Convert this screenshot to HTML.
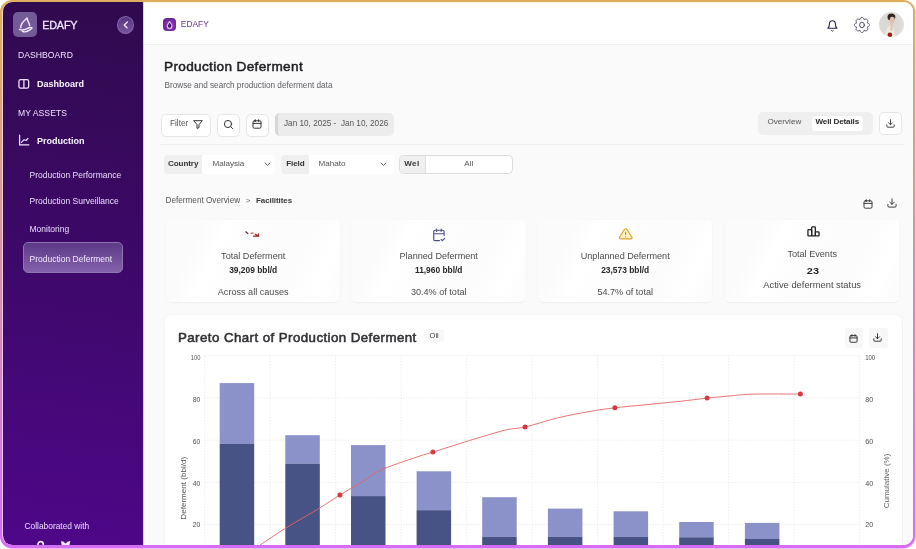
<!DOCTYPE html>
<html lang="en">
<head>
<meta charset="utf-8">
<title>EDAFY – Production Deferment</title>
<style>
*{box-sizing:border-box;margin:0;padding:0}
html,body{width:916px;height:549px;overflow:hidden;background:#fff}
body{font-family:"Liberation Sans",sans-serif;position:relative;color:#222;-webkit-font-smoothing:antialiased}
.abs{position:absolute}
.t{position:absolute;white-space:nowrap;line-height:1;transform:translateY(-50%)}
.tc{position:absolute;white-space:nowrap;line-height:1;transform:translate(-50%,-50%)}
svg{position:absolute;overflow:visible}

/* frame */
#halo{position:absolute;left:0;top:0;width:916px;height:549px;border-radius:13px;background:linear-gradient(180deg,#f3dfb9,#ecb9fa)}
#frame{position:absolute;left:0;top:0;width:915px;height:548px;border-radius:12px;background:linear-gradient(180deg,#dfae5e 0%,#d56df5 100%)}
#ring{position:absolute;left:2px;top:2px;width:911px;height:543px;border-radius:10px;background:linear-gradient(180deg,#ffd9c8,#f9c9fb)}
#app{position:absolute;left:3px;top:2px;width:910px;height:543px;border-radius:9.5px;overflow:hidden;background:#fafafa}

#pg{position:absolute;left:-3px;top:-2px;width:916px;height:549px;will-change:transform}
/* sidebar */
#side{position:absolute;left:3px;top:2px;width:140px;height:543px;background:linear-gradient(188deg,#2f0a4d 0%,#4e0789 100%)}
#logo{left:13px;top:12px;width:24px;height:25px;border-radius:5px;background:#745a97}
#collapse{left:116.7px;top:15.8px;width:17.8px;height:18.2px;border-radius:50%;border:1px solid #8565ad;background:linear-gradient(180deg,#593680,#7853a0)}
.sec{font-size:8.6px;color:#f1e2ff;letter-spacing:.05px}
.nav{font-size:9px;font-weight:bold;color:#fbf6ff}
.sub{font-size:8.5px;color:#ecdcff}
#active{left:23px;top:242px;width:100px;height:31px;border-radius:5px;border:1px solid #8f74b3;background:linear-gradient(180deg,#5c3888 0%,#8563aa 100%)}
/* main */
#main{position:absolute;left:143px;top:2px;width:770px;height:543px;background:#fafafa}
#hdr{position:absolute;left:143px;top:2px;width:770px;height:43px;background:#fff;border-bottom:1px solid #f0f0f0;box-shadow:inset 0 1px 0 rgba(255,236,150,.4)}
#hlogo{left:163.2px;top:17.9px;width:12.8px;height:13.5px;border-radius:4px;background:radial-gradient(circle at 52% 55%,#b55fd0 0%,#7a2ea6 45%,#5a1c8c 100%)}
#avatar{left:878.8px;top:12px;width:24.8px;height:25px;border-radius:50%;background:radial-gradient(circle at 40% 50%,#dad8d4 0%,#dcdad6 55%,#e9e7e3 100%);overflow:hidden}
.btn{background:#fff;border:1px solid #e6e6e6;border-radius:5px}
#dates{left:275px;top:113.3px;width:119px;height:22.7px;border-radius:5px;background:#ececec;border-left:3px solid #d6d6d6}
#tabs{left:757.5px;top:112px;width:115px;height:23px;border-radius:5px;background:#efefef}
#tabon{left:812px;top:116.3px;width:51px;height:14.5px;border-radius:3.5px;background:#fff}
.lab{background:#efefef}
.labt{font-size:8.1px;font-weight:bold;color:#333;letter-spacing:-.1px}
.sel{background:#fff;border-radius:0 4px 4px 0}
.selt{font-size:8.1px;color:#555}
#wellbox{left:399.3px;top:155px;width:113.3px;height:19px;border:1px solid #dcdcdc;border-radius:4.5px;background:#fff;overflow:hidden}
.card{background:linear-gradient(115deg,#fbfbfb 0%,#fbfbfb 18%,#ffffff 30%,#fdfdfd 46%,#fcfcfc 70%,#ffffff 86%,#fbfbfb 100%);border-radius:5px;box-shadow:0 0 0 1px rgba(0,0,0,.008),0 1px 1.5px rgba(0,0,0,.045)}
.c1{font-size:9.1px;color:#4a4a4a}
.c2{font-size:8.4px;font-weight:bold;color:#262626}
#panel{left:164.5px;top:314.5px;width:737px;height:240px;border-radius:7px;background:#fff;box-shadow:0 0 0 1px rgba(0,0,0,.014),0 1px 2px rgba(0,0,0,.03)}
</style>
</head>
<body>
<div id="halo"></div>
<div id="frame"></div>
<div id="ring"></div>
<div id="app"><div id="pg">
  <!-- ============ SIDEBAR ============ -->
  <div id="side"></div>
  <div class="abs" id="logo"><svg width="25" height="25" viewBox="0 0 25 25" style="left:0;top:0" fill="none" stroke="#f6ecff" stroke-width="1.4" stroke-linecap="round" stroke-linejoin="round"><path d="M14 6.2 C10.6 8.8 7.4 12.6 7.9 15.7"/><path d="M14 6.2 C14.4 8.8 16.4 11.4 16.6 13.5"/><path d="M6.4 17.4 C9.5 18.6 12 17.8 14.2 16.6 C16 15.6 18 15.2 18.9 16.1"/><path d="M9.3 19.4 C11.8 20.4 14 19.6 15.6 18.6 C16.8 17.9 18 17.3 18.9 16.1"/></svg></div>
  <div class="t" style="left:42.2px;top:24.7px;font-size:10.8px;color:#f3e6ff;letter-spacing:-.16px;-webkit-text-stroke:.3px #f3e6ff">EDAFY</div>
  <div class="abs" id="collapse"><svg width="16" height="16" viewBox="0 0 16 16" style="left:0;top:0" fill="none" stroke="#fbeeff" stroke-width="1.3" stroke-linecap="round" stroke-linejoin="round"><path d="M9.5 4.9 L6.2 8 L9 10.8"/></svg></div>

  <div class="t sec" style="left:18px;top:54.5px">DASHBOARD</div>
  <svg width="12" height="11" viewBox="18 78 12 11" style="left:18px;top:78px" fill="none" stroke="#f1dfff" stroke-width="1.3" stroke-linejoin="round"><rect x="18.95" y="79.65" width="9.7" height="8.5" rx="1.7"/><path d="M23.9 80 V88"/></svg>
  <div class="t nav" style="left:37px;top:83.5px">Dashboard</div>

  <div class="t sec" style="left:18px;top:112.5px">MY ASSETS</div>
  <svg width="12" height="12" viewBox="18 134 12 12" style="left:18px;top:134px" fill="none" stroke="#f1dfff" stroke-width="1.25" stroke-linecap="round" stroke-linejoin="round"><path d="M19.6 135.2 V144.9 H28.8"/><path d="M21.4 142.3 L24.1 139.7 L26.1 140.5 L27.9 138.5" stroke-width="1.15"/></svg>
  <div class="t nav" style="left:37px;top:140.5px">Production</div>

  <div class="t sub" style="left:29.5px;top:174.5px">Production Performance</div>
  <div class="t sub" style="left:29.5px;top:201px">Production Surveillance</div>
  <div class="t sub" style="left:29.5px;top:229px">Monitoring</div>
  <div class="abs" id="active"></div>
  <div class="t sub" style="left:29.5px;top:258.5px;color:#f4eaff">Production Deferment</div>

  <div class="t sub" style="left:24.5px;top:525.5px;font-size:8.4px">Collaborated with</div>
  <svg width="60" height="8" viewBox="0 0 60 8" style="left:30px;top:539px" fill="none" stroke="#f3e6ff" stroke-width="1.7" stroke-linecap="round"><circle cx="10.6" cy="5.4" r="2.7"/><path d="M30.9 2.2 L33.3 2.5 L35.5 4.4 L37.9 2.5 L40.3 2 L39.2 8 H32 Z" fill="#f3e6ff" stroke="none"/></svg>

  <!-- ============ MAIN ============ -->
  <div id="main"></div>
  <div id="hdr"></div>
  <div class="abs" style="left:143px;top:2px;width:1px;height:543px;background:rgba(150,100,200,.32)"></div>
  <div class="abs" id="hlogo"><svg width="13" height="13.5" viewBox="0 0 13 13.5" style="left:0;top:0" stroke-linecap="round" stroke-linejoin="round"><path d="M6.6 3.6 C5.6 5.2 4.3 6.4 4.3 8 A2.3 2.3 0 0 0 8.9 8 C8.9 6.6 7.7 5.4 6.6 3.6 Z" fill="#4a1672" stroke="#e9b6f1" stroke-width="1.1"/><path d="M5 10.6 C6.4 11.2 7.6 10.8 8.8 10" fill="none" stroke="#e7b0ef" stroke-width=".8"/></svg></div>
  <div class="t" style="left:180.8px;top:23.5px;font-size:8.4px;color:#6a3494;letter-spacing:.02px">EDAFY</div>
  <!-- bell -->
  <svg width="13" height="14" viewBox="0 0 13 14" style="left:826px;top:19px" fill="none" stroke="#2c2148" stroke-width="1.1" stroke-linecap="round" stroke-linejoin="round"><path d="M1.9 9.2 C3.1 8.3 3.4 7 3.4 5 A3 3.3 0 0 1 9.4 5 C9.4 7 9.7 8.3 10.9 9.2 Z"/><path d="M5.5 11.5 L6.4 12.3 L7.3 11.5" stroke-width=".9"/></svg>
  <!-- gear -->
  <svg width="18" height="18" viewBox="-9 -9 18 18" style="left:852.5px;top:15.8px" fill="none" stroke="#4a3f66" stroke-width=".92" stroke-linecap="round" stroke-linejoin="round"><path d="M0.00 -7.50 L0.29 -7.48 L0.58 -7.40 L0.86 -7.28 L1.13 -7.12 L1.37 -6.91 L1.60 -6.65 L1.79 -6.36 L1.96 -6.02 L2.08 -5.63 L2.10 -5.08 L2.51 -5.45 L2.87 -5.64 L3.23 -5.76 L3.58 -5.83 L3.91 -5.86 L4.24 -5.83 L4.54 -5.76 L4.82 -5.65 L5.08 -5.49 L5.30 -5.30 L5.49 -5.08 L5.65 -4.82 L5.76 -4.54 L5.83 -4.24 L5.86 -3.91 L5.83 -3.58 L5.76 -3.23 L5.64 -2.87 L5.45 -2.51 L5.08 -2.10 L5.63 -2.08 L6.02 -1.96 L6.36 -1.79 L6.65 -1.60 L6.91 -1.37 L7.12 -1.13 L7.28 -0.86 L7.40 -0.58 L7.48 -0.29 L7.50 -0.00 L7.48 0.29 L7.40 0.58 L7.28 0.86 L7.12 1.13 L6.91 1.37 L6.65 1.60 L6.36 1.79 L6.02 1.96 L5.63 2.08 L5.08 2.10 L5.45 2.51 L5.64 2.87 L5.76 3.23 L5.83 3.58 L5.86 3.91 L5.83 4.24 L5.76 4.54 L5.65 4.82 L5.49 5.08 L5.30 5.30 L5.08 5.49 L4.82 5.65 L4.54 5.76 L4.24 5.83 L3.91 5.86 L3.58 5.83 L3.23 5.76 L2.87 5.64 L2.51 5.45 L2.10 5.08 L2.08 5.63 L1.96 6.02 L1.79 6.36 L1.60 6.65 L1.37 6.91 L1.13 7.12 L0.86 7.28 L0.58 7.40 L0.29 7.48 L0.00 7.50 L-0.29 7.48 L-0.58 7.40 L-0.86 7.28 L-1.13 7.12 L-1.37 6.91 L-1.60 6.65 L-1.79 6.36 L-1.96 6.02 L-2.08 5.63 L-2.10 5.08 L-2.51 5.45 L-2.87 5.64 L-3.23 5.76 L-3.58 5.83 L-3.91 5.86 L-4.24 5.83 L-4.54 5.76 L-4.82 5.65 L-5.08 5.49 L-5.30 5.30 L-5.49 5.08 L-5.65 4.82 L-5.76 4.54 L-5.83 4.24 L-5.86 3.91 L-5.83 3.58 L-5.76 3.23 L-5.64 2.87 L-5.45 2.51 L-5.08 2.10 L-5.63 2.08 L-6.02 1.96 L-6.36 1.79 L-6.65 1.60 L-6.91 1.37 L-7.12 1.13 L-7.28 0.86 L-7.40 0.58 L-7.48 0.29 L-7.50 0.00 L-7.48 -0.29 L-7.40 -0.58 L-7.28 -0.86 L-7.12 -1.13 L-6.91 -1.37 L-6.65 -1.60 L-6.36 -1.79 L-6.02 -1.96 L-5.63 -2.08 L-5.08 -2.10 L-5.45 -2.51 L-5.64 -2.87 L-5.76 -3.23 L-5.83 -3.58 L-5.86 -3.91 L-5.83 -4.24 L-5.76 -4.54 L-5.65 -4.82 L-5.49 -5.08 L-5.30 -5.30 L-5.08 -5.49 L-4.82 -5.65 L-4.54 -5.76 L-4.24 -5.83 L-3.91 -5.86 L-3.58 -5.83 L-3.23 -5.76 L-2.87 -5.64 L-2.51 -5.45 L-2.10 -5.08 L-2.08 -5.63 L-1.96 -6.02 L-1.79 -6.36 L-1.60 -6.65 L-1.37 -6.91 L-1.13 -7.12 L-0.86 -7.28 L-0.58 -7.40 L-0.29 -7.48 Z"/><ellipse cx="0" cy="0" rx="2.35" ry="2.85"/></svg>
  <!-- avatar -->
  <div class="abs" id="avatar"><svg width="25" height="25" viewBox="0 0 25 25" style="left:0;top:0"><ellipse cx="12.4" cy="5" rx="3.9" ry="3.6" fill="#33231f"/><ellipse cx="13.2" cy="8" rx="2.5" ry="3.3" fill="#dfc0b0"/><path d="M5.6 25 C6 18.6 8.4 14.6 11.6 13.6 C14.4 14 15.4 18 15.4 25 Z" fill="#efe8dc"/><path d="M11.2 10.4 L14 10.6 L13.4 18.6 L11.6 18.8 Z" fill="#e2c4b4"/><ellipse cx="10.9" cy="22.8" rx="2.3" ry="2.3" fill="#a41a22"/></svg></div>

  <div class="t" style="left:164px;top:67px;font-size:13.6px;color:#1f1f23;letter-spacing:.34px;-webkit-text-stroke:.5px #1f1f23">Production Deferment</div>
  <div class="t" style="left:164.5px;top:85.5px;font-size:8.2px;color:#5c5c62">Browse and search production deferment data</div>

  <!-- toolbar row 1 -->
  <div class="abs btn" style="left:160.5px;top:113.6px;width:50px;height:23px"></div>
  <div class="t" style="left:170px;top:123.7px;font-size:8.2px;color:#555">Filter</div>
  <svg width="10" height="9" viewBox="0 0 10 9" style="left:193px;top:119.8px" fill="none" stroke="#333" stroke-width="1" stroke-linejoin="round"><path d="M0.7 0.7 H9.3 L6 4.6 V7.6 L4 8.4 V4.6 Z"/></svg>
  <div class="abs btn" style="left:216.5px;top:113.6px;width:23px;height:23px"></div>
  <svg width="11" height="11" viewBox="0 0 11 11" style="left:222.6px;top:119px" fill="none" stroke="#333" stroke-width="1" stroke-linecap="round"><circle cx="5" cy="5" r="3.6"/><path d="M7.7 7.7 L9.6 9.6"/></svg>
  <div class="abs btn" style="left:245.6px;top:113.6px;width:23px;height:23px"></div>
  <svg class="cal" width="10" height="10" viewBox="0 0 10 10" style="left:251.8px;top:119.2px" fill="none" stroke="#333" stroke-width="1" stroke-linecap="round" stroke-linejoin="round"><rect x="1" y="1.8" width="8" height="7.4" rx="1.3"/><path d="M1 4.4 H9 M3.3 0.7 V2.6 M6.7 0.7 V2.6"/></svg>
  <div class="abs" id="dates"></div>
  <div class="t" style="left:284px;top:123.5px;font-size:8.2px;color:#565656">Jan 10, 2025 -&nbsp; Jan 10, 2026</div>

  <div class="abs" id="tabs"></div>
  <div class="t" style="left:767.5px;top:122.3px;font-size:8.1px;color:#555">Overview</div>
  <div class="abs" id="tabon"></div>
  <div class="t" style="left:815.5px;top:122.3px;font-size:8.1px;font-weight:bold;color:#2a2a2a;letter-spacing:-.15px">Well Details</div>
  <div class="abs btn" style="left:878.5px;top:112.3px;width:23px;height:22.5px"></div>
  <svg class="dl" width="9" height="9" viewBox="0 0 10 10" style="left:885.6px;top:118.6px" fill="none" stroke="#333" stroke-width="1" stroke-linecap="round" stroke-linejoin="round"><path d="M5 0.8 V6.2 M2.8 4.2 L5 6.4 L7.2 4.2 M0.9 6.4 V8 A1.1 1.1 0 0 0 2 9.1 H8 A1.1 1.1 0 0 0 9.1 8 V6.4"/></svg>

  <div class="abs" style="left:160px;top:144px;width:744px;height:1px;background:#efefef"></div>

  <!-- toolbar row 2 -->
  <div class="abs lab" style="left:164px;top:154.5px;width:38px;height:19px;border-radius:4px 0 0 4px"></div>
  <div class="t labt" style="left:168px;top:163.5px">Country</div>
  <div class="abs sel" style="left:202px;top:154.5px;width:73px;height:19px"></div>
  <div class="t selt" style="left:212.4px;top:163.5px">Malaysia</div>
  <svg width="7" height="5" viewBox="0 0 7 5" style="left:264px;top:162.2px" fill="none" stroke="#5a5a5a" stroke-width=".95" stroke-linecap="round" stroke-linejoin="round"><path d="M1 1 L3.5 3.4 L6 1"/></svg>
  <div class="abs lab" style="left:281px;top:154.5px;width:27.5px;height:19px;border-radius:4px 0 0 4px"></div>
  <div class="t labt" style="left:286.2px;top:163.5px">Field</div>
  <div class="abs sel" style="left:308.5px;top:154.5px;width:85px;height:19px"></div>
  <div class="t selt" style="left:318.6px;top:163.5px">Mahato</div>
  <svg width="7" height="5" viewBox="0 0 7 5" style="left:380px;top:162.2px" fill="none" stroke="#5a5a5a" stroke-width=".95" stroke-linecap="round" stroke-linejoin="round"><path d="M1 1 L3.5 3.4 L6 1"/></svg>
  <div class="abs" id="wellbox"><div class="abs lab" style="left:0;top:0;width:26px;height:17px;border-right:1px solid #e2e2e2"></div></div>
  <div class="t labt" style="left:404.2px;top:163.5px;letter-spacing:.4px">Wel</div>
  <div class="tc selt" style="left:468.8px;top:163.5px">All</div>

  <!-- breadcrumb -->
  <div class="t" style="left:165.5px;top:201.3px;font-size:8.2px;color:#555">Deferment Overview</div>
  <div class="t" style="left:245.8px;top:201.3px;font-size:7.9px;color:#666">&gt;</div>
  <div class="t" style="left:256px;top:201.3px;font-size:8px;font-weight:bold;color:#3a3a3a;letter-spacing:-.08px">Facilitites</div>
  <svg width="10" height="10" viewBox="0 0 10 10" style="left:863px;top:198.6px" fill="none" stroke="#2a2a2a" stroke-width=".9" stroke-linecap="round" stroke-linejoin="round"><rect x="1" y="1.8" width="8" height="7.4" rx="1.3"/><path d="M1 4.4 H9 M3.3 0.7 V2.6 M6.7 0.7 V2.6"/></svg>
  <svg width="10" height="10" viewBox="0 0 10 10" style="left:887.4px;top:198.4px" fill="none" stroke="#2a2a2a" stroke-width=".9" stroke-linecap="round" stroke-linejoin="round"><path d="M5 0.8 V6.2 M2.8 4.2 L5 6.4 L7.2 4.2 M0.9 6.4 V8 A1.1 1.1 0 0 0 2 9.1 H8 A1.1 1.1 0 0 0 9.1 8 V6.4"/></svg>

  <!-- cards -->
  <div class="abs card" style="left:165.5px;top:220px;width:174.5px;height:82px"></div>
  <div class="tc c1" style="left:253.2px;top:256.6px">Total Deferment</div>
  <div class="tc c2" style="left:253.2px;top:270.3px">39,209 bbl/d</div>
  <div class="tc c1" style="left:253.2px;top:293.4px">Across all causes</div>
  <div class="abs card" style="left:351px;top:220px;width:174.5px;height:82px"></div>
  <div class="tc c1" style="left:438.7px;top:256.6px">Planned Deferment</div>
  <div class="tc c2" style="left:438.7px;top:270.3px">11,960 bbl/d</div>
  <div class="tc c1" style="left:438.7px;top:293.4px">30.4% of total</div>
  <div class="abs card" style="left:537.5px;top:220px;width:174.5px;height:82px"></div>
  <div class="tc c1" style="left:625.2px;top:256.6px">Unplanned Deferment</div>
  <div class="tc c2" style="left:625.2px;top:270.3px">23,573 bbl/d</div>
  <div class="tc c1" style="left:625.2px;top:293.4px">54.7% of total</div>
  <div class="abs card" style="left:724.5px;top:220px;width:174.5px;height:82px"></div>
  <div class="tc c1" style="left:812.2px;top:254.5px">Total Events</div>
  <div class="tc c2" style="left:813.2px;top:270.6px;font-size:9.7px;letter-spacing:.25px;transform:translate(-50%,-50%) scaleX(1.13)">23</div>
  <div class="tc c1" style="left:812.2px;top:286.2px;font-size:9.35px">Active deferment status</div>
  <!-- card icons -->
  <svg width="16" height="8" viewBox="244 230 16 8" style="left:244px;top:230px" fill="none" stroke-linecap="round" stroke-linejoin="round"><path d="M245.9 231.8 L247.9 233.6" stroke="#5c2238" stroke-width="1.25"/><path d="M251 233.3 L253.2 233" stroke="#b23434" stroke-width="1.1"/><path d="M253.6 236.2 L258.5 236.2 L258.5 233.9 M255.4 234.2 L258.4 236.1" stroke="#a32424" stroke-width="1.3"/></svg>
  <svg width="13.8" height="13.8" viewBox="0 0 24 24" style="left:432.2px;top:227.5px" fill="none" stroke="#4d4d92" stroke-width="2" stroke-linecap="round" stroke-linejoin="round"><path d="M8 2v4M16 2v4M21 13V6a2 2 0 0 0-2-2H5a2 2 0 0 0-2 2v14a2 2 0 0 0 2 2h8M3 10h18M16 20l2 2 4-4"/></svg>
  <svg width="15.4" height="13.6" viewBox="0 0 24 24" preserveAspectRatio="none" style="left:618.4px;top:227.2px" fill="#fff3c6" stroke="#e0a132" stroke-width="1.9" stroke-linecap="round" stroke-linejoin="round"><path d="m21.73 18-8-14a2 2 0 0 0-3.48 0l-8 14A2 2 0 0 0 4 21h16a2 2 0 0 0 1.73-3Z"/><path d="M12 9.5v3.5M12 17h.01" fill="none" stroke="#c98a2a"/></svg>
  <svg width="13" height="12" viewBox="0 0 13 12" style="left:806.5px;top:224.6px" fill="none" stroke="#222" stroke-width="1.3" stroke-linejoin="round"><rect x=".95" y="4.55" width="3.7" height="6.3" rx=".7"/><rect x="4.65" y="1.95" width="3.7" height="8.9" rx=".7"/><rect x="8.35" y="6.95" width="3.7" height="3.9" rx=".7"/></svg>

  <!-- chart panel -->
  <div class="abs" id="panel"></div>
  <div class="t" style="left:178px;top:338.4px;font-size:13.3px;color:#303034;letter-spacing:.43px;-webkit-text-stroke:.55px #303034">Pareto Chart of Production Deferment</div>
  <div class="abs" style="left:424px;top:328.5px;width:20px;height:13.5px;border-radius:3px;background:#f8f8f8"></div>
  <div class="tc" style="left:434.2px;top:335.6px;font-size:7.5px;color:#3c3c3c">Oil</div>
  <div class="abs" style="left:844.5px;top:328.3px;width:18.5px;height:20px;border-radius:3px;background:#f7f7f7"></div>
  <div class="abs" style="left:868.5px;top:328.3px;width:19.5px;height:20px;border-radius:3px;background:#f7f7f7"></div>
  <svg width="9" height="9" viewBox="0 0 10 10" style="left:849.2px;top:333.5px" fill="none" stroke="#262626" stroke-width="1" stroke-linecap="round" stroke-linejoin="round"><rect x="1" y="1.8" width="8" height="7.4" rx="1.3"/><path d="M1 4.4 H9 M3.3 0.7 V2.6 M6.7 0.7 V2.6"/></svg>
  <svg width="9" height="9" viewBox="0 0 10 10" style="left:873.2px;top:333.4px" fill="none" stroke="#262626" stroke-width="1" stroke-linecap="round" stroke-linejoin="round"><path d="M5 0.8 V6.2 M2.8 4.2 L5 6.4 L7.2 4.2 M0.9 6.4 V8 A1.1 1.1 0 0 0 2 9.1 H8 A1.1 1.1 0 0 0 9.1 8 V6.4"/></svg>
<svg id="chart" width="916" height="549" viewBox="0 0 916 549" style="left:0;top:0">
<g stroke="#e6e6e6" stroke-width=".8" stroke-dasharray="1.2 1.6" fill="none">
<path d="M204.7 355.6 H860"/>
<path d="M204.7 397.9 H860"/>
<path d="M204.7 440.1 H860"/>
<path d="M204.7 482.4 H860"/>
<path d="M204.7 524.6 H860"/>
<path d="M204.7 355.6 V549"/>
<path d="M270.2 355.6 V549"/>
<path d="M335.7 355.6 V549"/>
<path d="M401.2 355.6 V549"/>
<path d="M466.7 355.6 V549"/>
<path d="M532.2 355.6 V549"/>
<path d="M597.7 355.6 V549"/>
<path d="M663.2 355.6 V549"/>
<path d="M728.7 355.6 V549"/>
<path d="M794.2 355.6 V549"/>
<path d="M859.7 355.6 V549"/>
</g>
<rect x="219.7" y="383.1" width="34.5" height="60.8" fill="#8b91c9"/>
<rect x="219.7" y="443.9" width="34.5" height="105.1" fill="#475285"/>
<rect x="285.3" y="435.2" width="34.5" height="28.5" fill="#8b91c9"/>
<rect x="285.3" y="463.7" width="34.5" height="85.3" fill="#475285"/>
<rect x="351.0" y="445.1" width="34.5" height="51.0" fill="#8b91c9"/>
<rect x="351.0" y="496.1" width="34.5" height="52.9" fill="#475285"/>
<rect x="416.6" y="471.3" width="34.5" height="38.9" fill="#8b91c9"/>
<rect x="416.6" y="510.2" width="34.5" height="38.8" fill="#475285"/>
<rect x="482.2" y="497.2" width="34.5" height="39.6" fill="#8b91c9"/>
<rect x="482.2" y="536.8" width="34.5" height="12.2" fill="#475285"/>
<rect x="547.9" y="508.6" width="34.5" height="28.2" fill="#8b91c9"/>
<rect x="547.9" y="536.8" width="34.5" height="12.2" fill="#475285"/>
<rect x="613.6" y="511.3" width="34.5" height="25.5" fill="#8b91c9"/>
<rect x="613.6" y="536.8" width="34.5" height="12.2" fill="#475285"/>
<rect x="679.2" y="522.0" width="34.5" height="15.3" fill="#8b91c9"/>
<rect x="679.2" y="537.3" width="34.5" height="11.7" fill="#475285"/>
<rect x="744.9" y="522.9" width="34.5" height="16.1" fill="#8b91c9"/>
<rect x="744.9" y="539.0" width="34.5" height="10.0" fill="#475285"/>
<path d="M247.9 553.5 C249.9 552.1 253.4 549.6 259.7 545.4 C266.0 541.1 276.1 534.1 285.9 528.0 C295.7 521.9 309.6 514.2 318.6 508.7 C327.6 503.2 332.5 499.5 339.9 495.0 C347.3 490.5 356.0 485.6 362.8 481.5 C369.6 477.4 371.8 474.2 380.8 470.1 C389.8 466.0 408.2 460.0 416.9 457.0 C425.6 454.0 424.2 454.8 432.9 452.1 C441.6 449.4 457.2 444.3 469.3 440.6 C481.4 436.9 496.0 432.4 505.3 430.1 C514.6 427.8 516.3 429.0 525.0 427.0 C533.7 425.0 546.8 420.5 557.6 417.9 C568.4 415.3 580.5 413.1 590.0 411.4 C599.5 409.7 605.9 408.9 614.9 407.8 C623.9 406.7 633.2 406.0 644.1 404.9 C655.0 403.8 669.6 402.4 680.1 401.3 C690.6 400.2 698.7 399.0 707.1 398.1 C715.5 397.2 722.7 396.6 730.5 395.9 C738.3 395.2 742.4 394.4 754.0 394.1 C765.6 393.8 792.7 394.1 800.4 394.1" fill="none" stroke="#e46466" stroke-width=".9"/>
<circle cx="339.9" cy="495" r="2.5" fill="#d93a40"/>
<circle cx="432.9" cy="452.1" r="2.5" fill="#d93a40"/>
<circle cx="525" cy="427" r="2.5" fill="#d93a40"/>
<circle cx="614.9" cy="407.8" r="2.5" fill="#d93a40"/>
<circle cx="707.1" cy="398.1" r="2.5" fill="#d93a40"/>
<circle cx="800.4" cy="394.1" r="2.5" fill="#d93a40"/>
<g font-size="7.8" fill="#505050" font-family="Liberation Sans, sans-serif">
<text x="190.8" y="360.2" textLength="9.6" lengthAdjust="spacingAndGlyphs">100</text>
<text x="865.2" y="360.2" textLength="10" lengthAdjust="spacingAndGlyphs">100</text>
<text x="192.8" y="402.2" textLength="7.6" lengthAdjust="spacingAndGlyphs">80</text>
<text x="865.2" y="402.2" textLength="8" lengthAdjust="spacingAndGlyphs">80</text>
<text x="192.8" y="443.7" textLength="7.6" lengthAdjust="spacingAndGlyphs">60</text>
<text x="865.2" y="443.7" textLength="8" lengthAdjust="spacingAndGlyphs">60</text>
<text x="192.8" y="486.1" textLength="7.6" lengthAdjust="spacingAndGlyphs">40</text>
<text x="865.2" y="486.1" textLength="8" lengthAdjust="spacingAndGlyphs">40</text>
<text x="192.8" y="527.2" textLength="7.6" lengthAdjust="spacingAndGlyphs">20</text>
<text x="865.2" y="527.2" textLength="8" lengthAdjust="spacingAndGlyphs">20</text>
<text transform="translate(186.4 488.2) rotate(-90)" text-anchor="middle" font-size="8.1" fill="#585858">Deferment (bbl/d)</text>
<text transform="translate(889.4 481) rotate(-90)" text-anchor="middle" font-size="8" fill="#666">Cumulative (%)</text>
</g></svg>
</div></div>
</body>
</html>
